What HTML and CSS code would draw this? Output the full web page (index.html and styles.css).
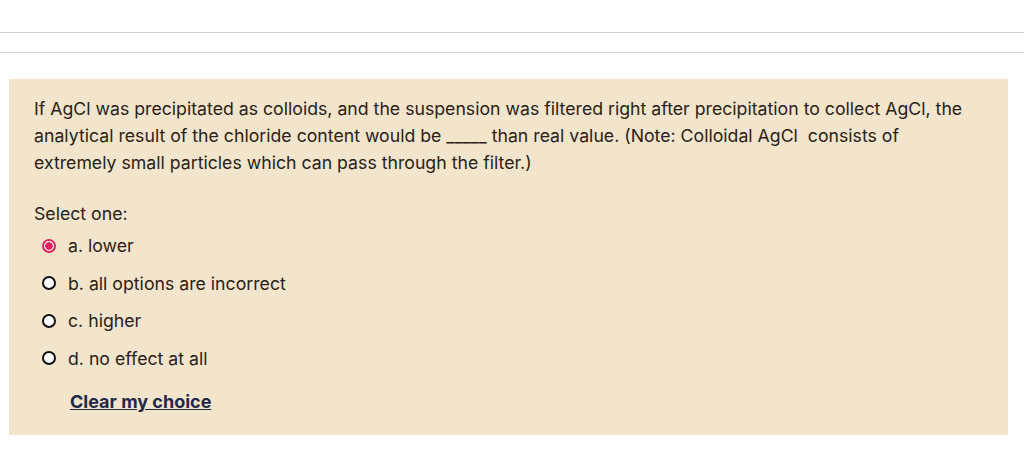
FILE: index.html
```html
<!DOCTYPE html>
<html>
<head>
<meta charset="utf-8">
<link rel="stylesheet" href="styles.css">
</head>
<body>
<div class="rule rule-top"></div>
<div class="rule rule-bottom"></div>
<div class="formulation">
  <p class="qtext">If AgCl was precipitated as colloids, and the suspension was filtered right after precipitation to collect AgCl, the analytical result of the chloride content would be _____ than real value. (Note: Colloidal AgCl&nbsp; consists of extremely small particles which can pass through the filter.)</p>
  <div class="prompt">Select one:</div>
  <div class="answers">
    <div class="opt"><span class="radio checked"></span><span>a. lower</span></div>
    <div class="opt"><span class="radio"></span><span>b. all options are incorrect</span></div>
    <div class="opt"><span class="radio"></span><span>c. higher</span></div>
    <div class="opt"><span class="radio"></span><span>d. no effect at all</span></div>
  </div>
  <a class="clear" href="#">Clear my choice</a>
</div>
</body>
</html>
```
FILE: styles.css
```css
html, body {
  margin: 0;
  padding: 0;
  background: #ffffff;
  font-family: Inter, "Noto Sans", sans-serif;
  color: #2b2118;
}
.rule {
  height: 1px;
  background: #cfcfcf;
}
.rule-top { margin-top: 32px; }
.rule-bottom { margin-top: 19px; }
.formulation {
  margin: 26px 16px 0 9px;
  background: #f2e5cb;
  padding: 16px 25px 22px 25px;
  height: 318px;
}
.qtext {
  margin: 0;
  font-size: 17.7px;
  line-height: 27px;
}
.prompt {
  margin-top: 24px;
  font-size: 17.7px;
  line-height: 27px;
}
.answers {
  margin-top: 5px;
  display: flex;
  flex-direction: column;
  gap: 10.5px;
}
.opt {
  display: flex;
  align-items: center;
  gap: 12px;
  font-size: 17.7px;
  line-height: 27px;
  padding-left: 8px;
}
.radio {
  width: 10px;
  height: 10px;
  border: 2px solid #111;
  border-radius: 50%;
  background: #fff;
  flex: none;
}
.radio.checked {
  border-color: #e0245e;
  background: radial-gradient(circle, #e0245e 0 3.5px, #fff 4px);
}
.clear {
  display: inline-block;
  margin-top: 19px;
  margin-left: 36px;
  font-size: 18px;
  font-weight: 700;
  color: #1f2a48;
  text-decoration: underline;
}
```
